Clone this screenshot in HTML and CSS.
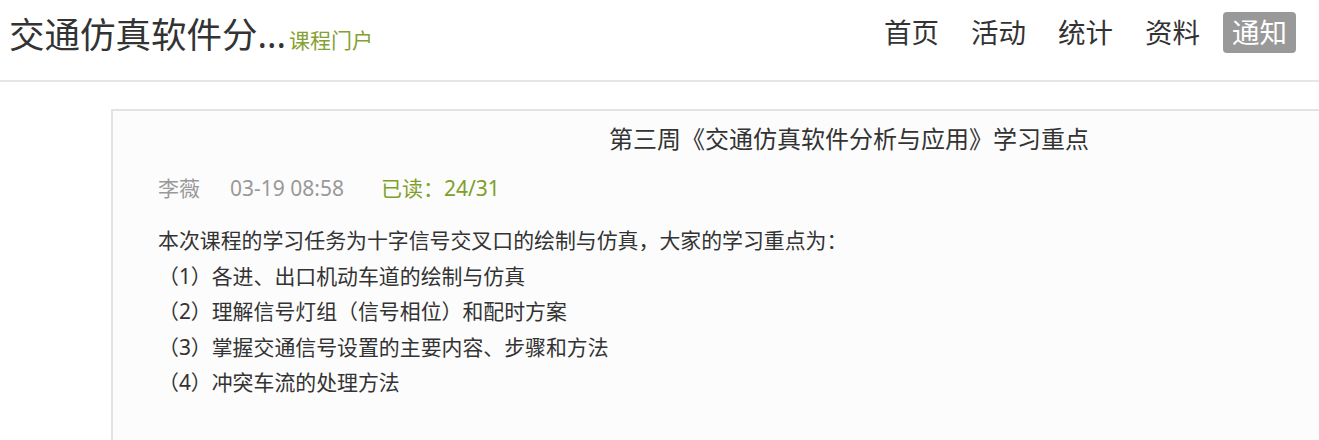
FILE: index.html
```html
<!DOCTYPE html>
<html lang="zh-CN">
<head>
    <meta charset="UTF-8">
    <meta name="viewport" content="width=device-width, initial-scale=1.0">
    <title>通知 - 交通仿真软件分析与应用</title>
    <link rel="stylesheet" href="styles.css">
</head>
<body>
    <div class="header">
        <h1 class="course-title">交通仿真软件分...<span class="portal">课程门户</span></h1>
        <ul class="nav">
            <li>首页</li>
            <li>活动</li>
            <li>统计</li>
            <li>资料</li>
            <li class="active">通知</li>
        </ul>
    </div>

    <div class="notice">
        <h2 class="notice-title">第三周《交通仿真软件分析与应用》学习重点</h2>
        <div class="notice-meta">
            <span class="author">李薇</span>
            <span class="time">03-19 08:58</span>
            <span class="read">已读：24/31</span>
        </div>
        <div class="notice-body">
            <p>本次课程的学习任务为十字信号交叉口的绘制与仿真，大家的学习重点为：</p>
            <p>（1）各进、出口机动车道的绘制与仿真</p>
            <p>（2）理解信号灯组（信号相位）和配时方案</p>
            <p>（3）掌握交通信号设置的主要内容、步骤和方法</p>
            <p>（4）冲突车流的处理方法</p>
        </div>
    </div>
</body>
</html>
```

FILE: styles.css
```css
body {
    margin: 0;
    font-family: "Noto Sans", "Noto Sans CJK SC", sans-serif;
    color: #333;
    background-color: #fff;
    overflow-x: hidden;
}

.header {
    display: flex;
    justify-content: space-between;
    align-items: flex-start;
    height: 82px;
    padding: 12px 23px 0 10px;
    box-sizing: border-box;
    border-bottom: 2px solid #e6e6e6;
}

.course-title {
    margin: 2px 0 0 -1px;
    font-size: 35.5px;
    font-weight: normal;
    line-height: 41px;
    white-space: nowrap;
}

.portal {
    font-size: 21px;
    margin-left: 3px;
    color: #86a133;
}

.nav {
    display: flex;
    gap: 14px;
    margin: 0;
    padding: 0;
    list-style: none;
}

.nav li {
    padding: 0 9px;
    font-size: 27.5px;
    line-height: 41px;
    border-radius: 4px;
}

.nav li.active {
    background-color: #999;
    color: #fff;
}

.notice {
    width: 1476px;
    margin: 27px 0 0 111px;
    padding: 10px 45px 30px;
    box-sizing: border-box;
    background-color: #fcfcfc;
    border: 2px solid #e3e3e3;
    min-height: 340px;
}

.notice-title {
    margin: 0;
    text-align: center;
    font-size: 24px;
    font-weight: normal;
    line-height: 36px;
}

.notice-meta {
    display: flex;
    margin-top: 13px;
    font-size: 21px;
    line-height: 36px;
    color: #999;
}

.notice-meta .author {
    margin-right: 30px;
}

.notice-meta .time {
    margin-right: 37px;
}

.notice-meta .read {
    color: #7f9f2a;
}

.notice-body {
    margin-top: 17px;
    font-size: 20.9px;
    line-height: 35.5px;
}

.notice-body p {
    margin: 0;
}
```
